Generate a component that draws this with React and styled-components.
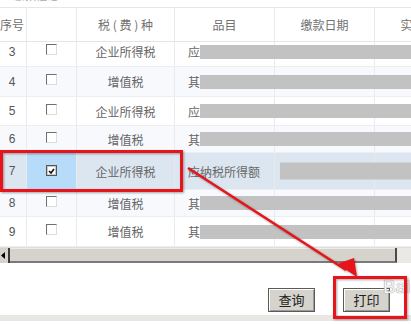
import React from 'react';
import styled, { createGlobalStyle, css } from 'styled-components';

const GlobalStyle = createGlobalStyle`
  html, body {
    margin: 0;
    padding: 0;
    background: #fff;
  }
  body {
    font-family: "Liberation Sans", "Noto Sans CJK SC", sans-serif;
  }
`;

const cols = '29px 50px 98px 100px 100px 100px';

const Page = styled.div`
  position: relative;
  width: 411px;
  height: 325px;
  overflow: hidden;
  background: #fff;
  display: flex;
  flex-direction: column;
`;

// the panel title sits above the visible area, only its lower edge shows
const TitleStrip = styled.div`
  height: 7px;
  overflow: hidden;
  padding-left: 12px;
  span {
    display: block;
    margin-top: -11px;
    font-family: "Noto Sans CJK SC", sans-serif;
    font-size: 12px;
    line-height: 12px;
    color: #aaa;
  }
`;

const Table = styled.div`
  margin-left: -2px;
  display: flex;
  flex-direction: column;
`;

const HeaderRow = styled.div`
  display: grid;
  grid-template-columns: ${cols};
  height: 35px;
  box-sizing: border-box;
  border-top: 1px solid #e6e6e8;
  border-bottom: 1px solid #e3e5ea;
`;

const HeadCell = styled.div`
  display: flex;
  align-items: center;
  justify-content: center;
  border-right: 1px solid #e8eaee;
  font-family: "Noto Sans CJK SC", sans-serif;
  font-size: 12px;
  color: #707070;
  white-space: nowrap;
  overflow: hidden;
`;

const Body = styled.div`
  height: 205px;
  overflow: hidden;
`;

const Rows = styled.div`
  margin-top: -5px;
`;

const Row = styled.div`
  position: relative;
  display: grid;
  grid-template-columns: ${cols};
  height: ${(p) => p.$h}px;
  box-sizing: border-box;
  border-bottom: 1px solid #eceef2;
  background: ${(p) => (p.$selected ? '#dce6f1' : p.$tint ? '#f7f9fd' : '#fff')};
`;

const Cell = styled.div`
  display: flex;
  align-items: center;
  justify-content: ${(p) => (p.$left ? 'flex-start' : 'center')};
  padding-left: ${(p) => (p.$left ? '13px' : '0')};
  border-right: 1px solid #e8eaee;
  font-family: "Noto Sans CJK SC", sans-serif;
  font-size: 12px;
  color: #666;
  white-space: nowrap;
  overflow: hidden;
  background: ${(p) => (p.$hl ? '#b6dcf9' : 'transparent')};
`;

const NumCell = styled(Cell)`
  font-family: "Liberation Sans", sans-serif;
  color: #555;
`;

const Box = styled.span`
  width: 11px;
  height: 11px;
  box-sizing: border-box;
  border: 1px solid;
  border-color: #707070 #dcdcdc #dcdcdc #707070;
  background: #fff;
  display: inline-flex;
  align-items: center;
  justify-content: center;
  margin-bottom: 4px;
  ${(p) =>
    p.$checked &&
    css`
      border-color: #555;
      box-shadow: inset 0 0 0 1px #c8c8c8;
      margin-bottom: 1px;
    `}
`;

const Redact = styled.div`
  position: absolute;
  left: ${(p) => p.$left}px;
  right: 0;
  top: 50%;
  height: ${(p) => p.$size}px;
  transform: translateY(-50%);
  background: #c2c2c2;
`;

const ScrollBar = styled.div`
  display: flex;
  height: 16px;
  box-sizing: border-box;
  background: #ebe9e5;
  border-top: 1px solid #e2dfda;
`;

const ArrowBtn = styled.div`
  width: 10px;
  display: flex;
  align-items: center;
  padding-left: 1px;
  box-sizing: border-box;
  background: #d6d3cd;
  border-right: 2px solid #3c3c3c;
`;

const Thumb = styled.div`
  width: 385px;
  background: #d6d3cd;
  border-right: 2px solid #4a4a4a;
  border-bottom: 2px solid #7a7a7a;
  box-shadow: inset 0 1px 0 #eeece8;
`;

const Footer = styled.div`
  height: 52px;
  display: flex;
  justify-content: flex-end;
  align-items: flex-start;
  gap: 28px;
  padding: 25px 21px 0 0;
  box-sizing: border-box;
`;

const Button = styled.button`
  width: 47px;
  height: 24px;
  padding: 0;
  background: #d6d3cd;
  border: 1px solid #5a5a5a;
  box-shadow: inset 1px 1px 0 #fff, inset -1px -1px 0 #9a9a9a;
  font-family: "Noto Sans CJK SC", sans-serif;
  font-size: 13px;
  color: #222;
  line-height: 20px;
`;

const BottomBand = styled.div`
  height: 6px;
  background: #e9e7e4;
`;

const Overlay = styled.svg`
  position: absolute;
  left: 0;
  top: 0;
  pointer-events: none;
  filter: drop-shadow(1px 1px 1px rgba(0, 0, 0, 0.35));
`;

const Watermark = styled.div`
  position: absolute;
  left: 383px;
  top: 276px;
  font-family: "Liberation Sans", sans-serif;
  font-size: 19px;
  color: rgba(255, 255, 255, 0.9);
  text-shadow: 0 0 1px #9a9a9a, 0 0 1px #9a9a9a;
  pointer-events: none;
`;

const rows = [
  { no: 3, type: '企业所得税', item: '应', h: 30 },
  { no: 4, type: '增值税', item: '其他', h: 30, tint: true },
  { no: 5, type: '企业所得税', item: '应', h: 29 },
  { no: 6, type: '增值税', item: '其他', h: 27, tint: true },
  { no: 7, type: '企业所得税', item: '应纳税所得额', h: 37, selected: true },
  { no: 8, type: '增值税', item: '其他', h: 27, tint: true },
  { no: 9, type: '增值税', item: '其他', h: 30 },
];

const CheckMark = () => (
  <svg width="7" height="6" viewBox="0 0 7 6">
    <path d="M1 3 L3 5 L6 1" fill="none" stroke="#111" strokeWidth="1.6" />
  </svg>
);

const App = () => (
  <>
    <GlobalStyle />
    <Page>
      <TitleStrip>
        <span>缴款信息</span>
      </TitleStrip>
      <Table>
        <HeaderRow>
          <HeadCell>序号</HeadCell>
          <HeadCell />
          <HeadCell>税 ( 费 ) 种</HeadCell>
          <HeadCell>品目</HeadCell>
          <HeadCell>缴款日期</HeadCell>
          <HeadCell>实缴金额</HeadCell>
        </HeaderRow>
        <Body>
          <Rows>
            {rows.map((r) => (
              <Row key={r.no} $h={r.h} $selected={r.selected} $tint={r.tint}>
                <NumCell>{r.no}</NumCell>
                <Cell $hl={r.selected}>
                  <Box $checked={r.selected}>{r.selected && <CheckMark />}</Box>
                </Cell>
                <Cell>{r.type}</Cell>
                <Cell $left>{r.item}</Cell>
                <Cell />
                <Cell />
                <Redact $left={r.selected ? 282 : 202} $size={r.selected ? 17 : 14} />
              </Row>
            ))}
          </Rows>
        </Body>
      </Table>
      <ScrollBar>
        <ArrowBtn>
          <svg width="4" height="7" viewBox="0 0 4 7">
            <path d="M4 0 L0 3.5 L4 7 Z" fill="#000" />
          </svg>
        </ArrowBtn>
        <Thumb />
      </ScrollBar>
      <Footer>
        <Button>查询</Button>
        <Button>打印</Button>
      </Footer>
      <BottomBand />

      <Watermark>Bai</Watermark>
      <Overlay width="411" height="325" viewBox="0 0 411 325">
        <rect x="1.5" y="151.5" width="180" height="39" fill="none" stroke="#e8141a" strokeWidth="3" />
        <rect x="334.5" y="277.5" width="71" height="40" fill="none" stroke="#e8141a" strokeWidth="3" />
        <line x1="188" y1="168" x2="346" y2="270" stroke="#e8141a" strokeWidth="2.5" />
        <path d="M357 277 L337 264 L354 258 Z" fill="#e8141a" />
      </Overlay>
    </Page>
  </>
);

export default App;
